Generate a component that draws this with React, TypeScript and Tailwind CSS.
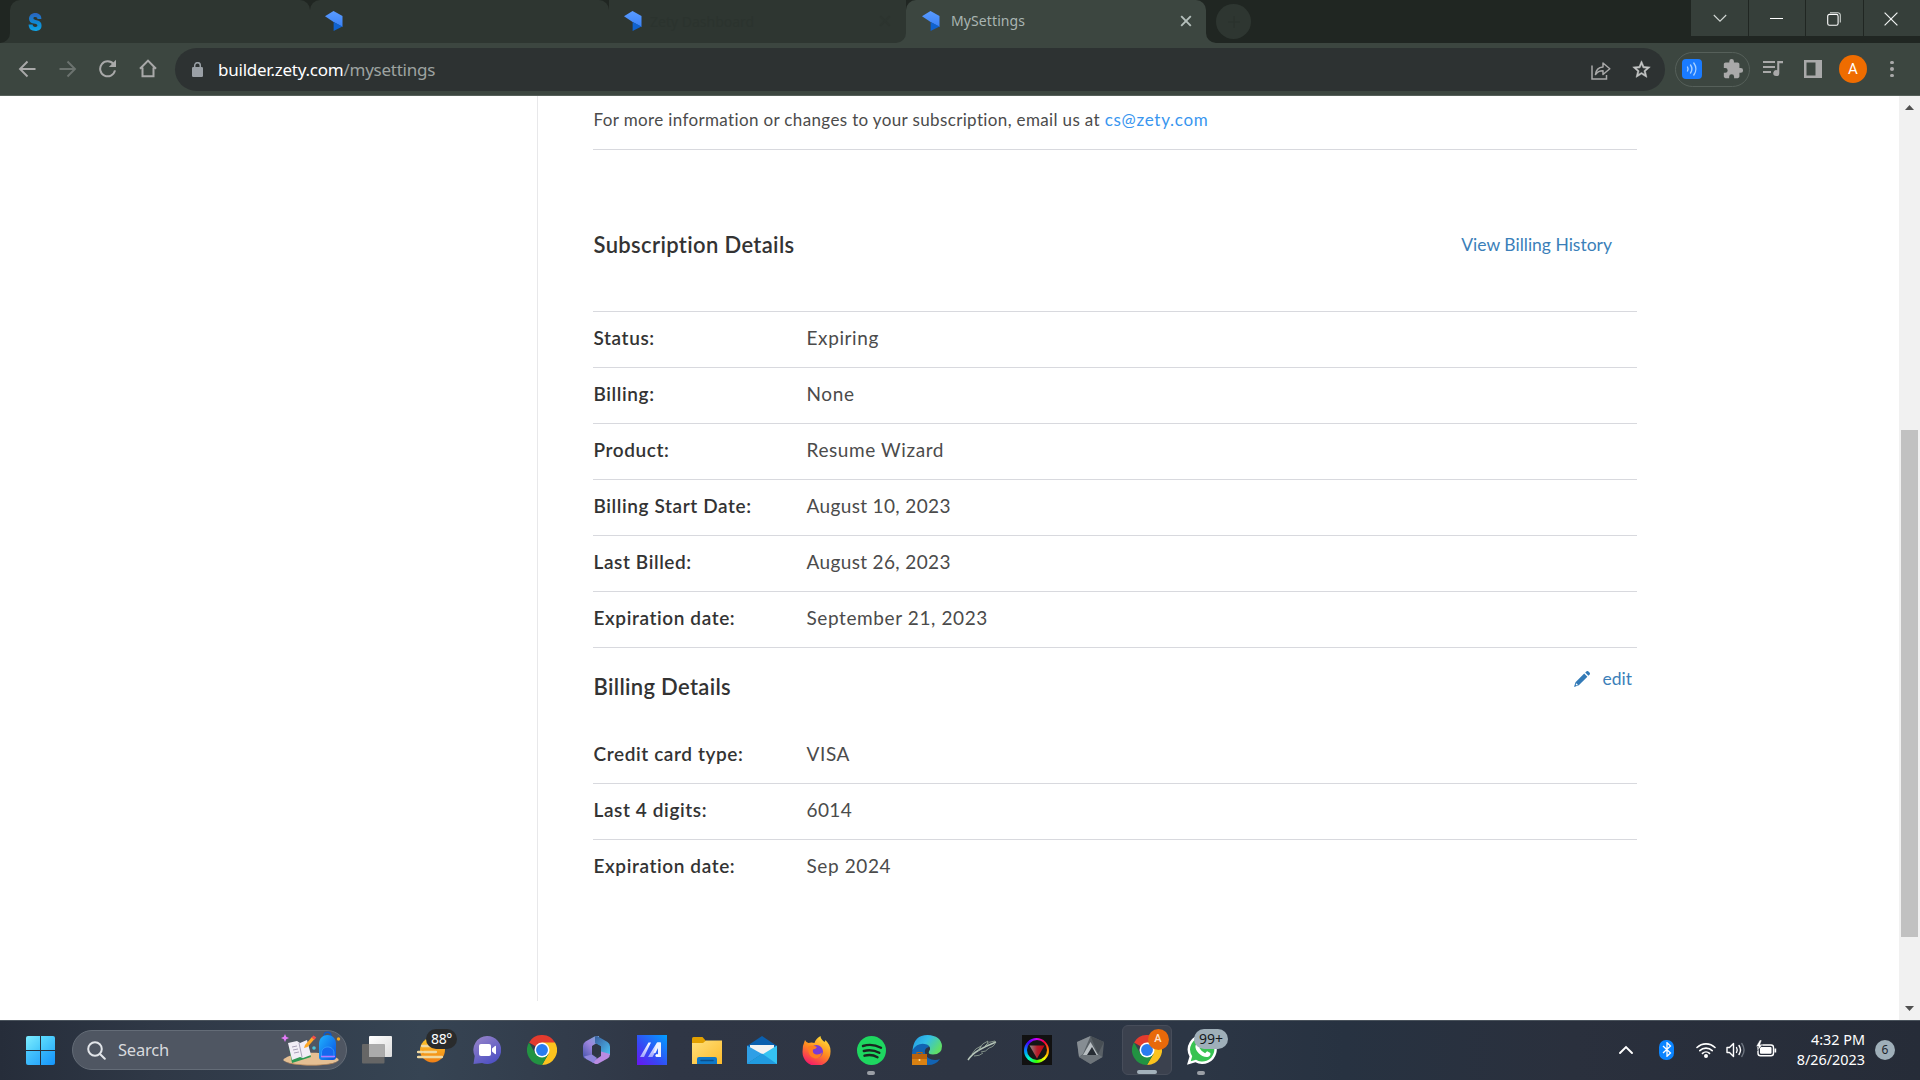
import type { ReactNode } from "react";

function ZetyLogo() {
  return (
    <svg width="18" height="20" viewBox="0 0 18 20" className="-mt-px shrink-0">
      <defs>
        <linearGradient id="zetyTop" x1="0" y1="0" x2="0" y2="1">
          <stop offset="0" stopColor="#5a9bff" />
          <stop offset="1" stopColor="#3a82f7" />
        </linearGradient>
      </defs>
      <path d="M0 5.2 8.5 0 17.5 5v11L8.6 11z" fill="url(#zetyTop)" />
      <path d="M8.6 11 17.5 15.5 8.6 20z" fill="#0f62cf" />
    </svg>
  );
}

function CloseX({ color }: { color: string }) {
  return (
    <svg width="12" height="12" viewBox="0 0 12 12" className="-mt-px shrink-0">
      <path d="M1.2 1.2 10.8 10.8M10.8 1.2 1.2 10.8" stroke={color} strokeWidth="1.9" />
    </svg>
  );
}

function TabStrip() {
  return (
    <div className="flex h-[43px] bg-[#202622]">
      <svg width="10" height="43" className="shrink-0">
        <path d="M10 33A10 10 0 0 1 0 43h10z" fill="#2e3631" />
      </svg>
      <div className="flex h-[43px] w-[300px] shrink-0 items-center rounded-t-[10px] bg-[#2e3631] pl-[18px] pr-4">
        <span className="block w-4 origin-left scale-x-[0.86] bg-gradient-to-b from-[#2f4fb5] via-[#0f86d2] to-[#12b4ee] bg-clip-text font-['Inter'] text-[25px] leading-7 font-black text-transparent">
          S
        </span>
      </div>
      <div className="flex h-[43px] w-[299px] shrink-0 items-center rounded-t-[10px] bg-[#2e3631] pl-[15px]">
        <ZetyLogo />
      </div>
      <div className="flex h-[43px] w-[297px] shrink-0 items-center bg-[#3c4640]">
        <div className="flex h-full w-full items-center rounded-br-[10px] bg-[#2e3631] pr-[15px] pl-[15px]">
          <ZetyLogo />
          <span className="ml-2 flex-1 font-['Noto_Sans',sans-serif] text-sm text-[#2b332e]">Zety Dashboard</span>
          <CloseX color="#2c342f" />
        </div>
      </div>
      <div className="flex h-[43px] w-[300px] shrink-0 items-center rounded-t-[10px] bg-[#3c4640] pr-[14px] pl-[16px]">
        <ZetyLogo />
        <span className="-mt-px ml-[11px] flex-1 font-['Noto_Sans',sans-serif] text-sm tracking-[0.1px] text-[#a9b5b2]">
          MySettings
        </span>
        <CloseX color="#b5c0bc" />
      </div>
      <svg width="10" height="43" className="shrink-0">
        <path d="M0 33a10 10 0 0 0 10 10H0z" fill="#3c4640" />
      </svg>
      <div className="mt-1 flex h-[35px] w-[35px] items-center justify-center rounded-full bg-[#2e3631]">
        <svg width="12" height="12" viewBox="0 0 12 12">
          <path d="M6 0v12M0 6h12" stroke="#2b332e" strokeWidth="1.6" />
        </svg>
      </div>
      <div className="ml-auto flex h-9 gap-px">
        <div className="flex w-[57px] items-center justify-center bg-[#363f3a]">
          <svg width="14" height="9" viewBox="0 0 14 9" className="mt-px">
            <path d="m.8 1 6.2 6.2L13.2 1" fill="none" stroke="#d3d8d5" strokeWidth="1.1" />
          </svg>
        </div>
        <div className="flex w-14 items-center justify-center bg-[#363f3a] pr-0.5">
          <span className="h-px w-[13px] bg-white" />
        </div>
        <div className="flex w-[57px] items-center justify-center bg-[#363f3a] pr-0.5">
          <svg width="14" height="14" viewBox="0 0 14 14" fill="none" stroke="#fff" strokeWidth="1.1" className="mt-px">
            <rect x=".7" y="2.4" width="10.4" height="10.8" rx="1.8" />
            <path d="M3 .7h7.6a2.6 2.6 0 0 1 2.7 2.7v7" stroke="#cdd3cf" />
          </svg>
        </div>
        <div className="flex w-[56px] items-center justify-center bg-[#363f3a] pr-0.5">
          <svg width="14" height="14" viewBox="0 0 14 14" className="mt-px">
            <path d="M.6.6 13.4 13.4M13.4.6.6 13.4" stroke="#f1f3f2" strokeWidth="1.2" />
          </svg>
        </div>
      </div>
    </div>
  );
}

function Toolbar() {
  return (
    <div className="flex h-[53px] items-center border-b border-[#56605a] bg-[#3c4640]">
      <div className="flex w-[175px] shrink-0 items-center pl-[18px]">
        <svg width="18" height="18" viewBox="0 0 18 18" fill="none" stroke="#a9a9a9" strokeWidth="1.9">
          <path d="M17.5 9H2.5M9.5 1.5 2 9l7.5 7.5" />
        </svg>
        <svg width="18" height="18" viewBox="0 0 18 18" fill="none" stroke="#6c736f" strokeWidth="1.9" className="ml-[23px]">
          <path d="M.5 9h15M8.5 1.5 16 9l-7.5 7.5" />
        </svg>
        <svg width="19" height="19" viewBox="0 0 19 19" className="-mt-px ml-[21px]">
          <path d="M15.6 5.2A7.5 7.5 0 1 0 17 11.4" fill="none" stroke="#a9a9a9" strokeWidth="2" />
          <path d="M18 .8V8h-7.200z" fill="#a9a9a9" />
        </svg>
        <svg width="18" height="19" viewBox="0 0 18 19" fill="none" stroke="#a9a9a9" strokeWidth="2" className="-mt-px ml-[22px]">
          <path d="M3.5 8.500v8.800h11V8.500M1 9.800l8-8.200 8 8.200" />
        </svg>
      </div>
      <div className="flex h-[43px] w-[1490px] shrink-0 items-center rounded-full bg-[#2d3232] pr-[13px] pl-[17px]">
        <svg width="11" height="15" viewBox="0 0 11 15" className="mt-px">
          <rect y="5" width="11" height="10" rx="1.3" fill="#9aa0a6" />
          <path d="M2.7 6V3.5a2.800 2.800 0 0 1 5.600 0V6" fill="none" stroke="#9aa0a6" strokeWidth="1.5" />
        </svg>
        <span className="mt-0.5 ml-[15px] flex-1 font-['Noto_Sans',sans-serif] text-[17px] tracking-[-0.24px] text-[#9da3a1]">
          <span className="text-white">builder.zety.com</span>/mysettings
        </span>
        <svg width="20" height="19" viewBox="0 0 20 19" fill="none" stroke="#a9a9a9" strokeWidth="1.5" className="mt-0.5">
          <path d="M1 4.500v13.500h14.500v-4" />
          <path
            d="M4.500 13.500c.5-5 3-7.300 7.500-7.600V2l6.800 5.800L12 13.500V9.800c-3.300 0-5.700 1-7.500 3.700z"
            strokeLinejoin="round"
          />
        </svg>
        <svg width="21" height="21" viewBox="0 0 24 24" className="mt-px ml-5">
          <path
            d="m22 9.240-7.190-.62L12 2 9.190 8.630 2 9.240l5.460 4.730L5.820 21 12 17.270 18.180 21l-1.630-7.030zM12 15.400l-3.760 2.270 1-4.280-3.320-2.880 4.380-.38L12 6.100l1.710 4.040 4.380.38-3.320 2.880 1 4.280z"
            fill="#c4c6c5"
            stroke="#c4c6c5"
            strokeWidth=".6"
          />
        </svg>
      </div>
      <div className="ml-[10px] flex h-[35px] w-[75px] shrink-0 items-center justify-between rounded-full border border-[#56605a] pr-[5px] pl-[6px]">
        <span className="flex h-5 w-5 items-center justify-center rounded-[4px] bg-[#1a7bff]">
          <svg width="12" height="14" viewBox="0 0 12 14" fill="none" stroke="#a8d0ff" strokeWidth="1.4" strokeLinecap="round">
            <path d="M1.500 5a4 4 0 0 1 0 4M4.500 3a7 7 0 0 1 0 8M7.800 1a10 10 0 0 1 0 12" />
          </svg>
        </span>
        <svg width="22" height="22" viewBox="0 0 24 24" fill="#a9a9a9" className="-mt-px">
          <path d="M20.500 11H19V7c0-1.100-.9-2-2-2h-4V3.500a2.500 2.500 0 0 0-5 0V5H4c-1.100 0-2 .9-2 2v3.800h1.500a2.700 2.700 0 0 1 0 5.400H2V20c0 1.100.9 2 2 2h3.800v-1.500a2.700 2.700 0 0 1 5.400 0V22H17c1.100 0 2-.9 2-2v-4h1.500a2.500 2.500 0 0 0 0-5z" />
        </svg>
      </div>
      <svg width="20" height="17" viewBox="0 0 20 17" className="-mt-px ml-[13px] shrink-0" fill="#a9a9a9">
        <path d="M0 1h12v2H0zM0 6h12v2H0zM0 11h8v2H0zM14.200 1H20v2.300h-3.700v9.700a3 3 0 1 1-2.100-2.800z" />
      </svg>
      <svg width="18" height="18" viewBox="0 0 18 18" className="ml-[21px] shrink-0">
        <path d="M0 0h18v18H0zM2.500 2.500v13h9v-13z" fill="#a9a9a9" fillRule="evenodd" />
      </svg>
      <span className="ml-[17px] flex h-7 w-7 shrink-0 items-center justify-center rounded-full bg-[#ef6c00] font-['Roboto',sans-serif] text-[15px] text-white">
        A
      </span>
      <span className="ml-[23px] flex flex-col gap-[3px]">
        <i className="h-[3.5px] w-[3.5px] rounded-full bg-[#a9a9a9]" />
        <i className="h-[3.5px] w-[3.5px] rounded-full bg-[#a9a9a9]" />
        <i className="h-[3.5px] w-[3.5px] rounded-full bg-[#a9a9a9]" />
      </span>
    </div>
  );
}

function Row({ label, value, last, tight }: { label: string; value: string; last?: boolean; tight?: boolean }) {
  return (
    <div
      className={
        last
          ? "flex h-[55px] items-center pb-[2px] pl-[0.5px] text-[19px] tracking-[0.6px]"
          : "flex h-14 items-center border-b border-[#d8d9de] pb-[2px] pl-[0.5px] text-[19px] tracking-[0.6px]"
      }
    >
      <span className="w-[213px] font-semibold text-[#333]">{label}</span>
      <span className={tight ? "tracking-[0.36px] text-[#4b4b4b]" : "text-[#4b4b4b]"}>{value}</span>
    </div>
  );
}

function Settings() {
  return (
    <div className="flex h-[924px] bg-white font-['Lato',sans-serif]">
      <div className="h-[905px] w-[538px] shrink-0 border-r border-[#e8e8ea]" />
      <div className="ml-[55px] w-[1044px] shrink-0">
        <p className="h-[54px] border-b border-[#d8d9de] pt-[12px] pl-[0.5px] text-[17px] leading-6 tracking-[0.36px] text-[#4b4b4b]">
          For more information or changes to your subscription, email us at{" "}
          <a className="tracking-[0.7px] text-[#3996ef]">cs@zety.com</a>
        </p>
        <div className="flex h-[162px] items-start justify-between border-b border-[#d8d9de] pt-[81px] pr-[25px] pl-[0.5px]">
          <h2 className="text-[22px] leading-7 font-semibold tracking-[0.35px] text-[#333]">Subscription Details</h2>
          <a className="text-[17.5px] leading-7 text-[#3b7fb9]">View Billing History</a>
        </div>
        <Row label="Status:" value="Expiring" />
        <Row label="Billing:" value="None" />
        <Row label="Product:" value="Resume Wizard" />
        <Row label="Billing Start Date:" value="August 10, 2023" tight />
        <Row label="Last Billed:" value="August 26, 2023" tight />
        <Row label="Expiration date:" value="September 21, 2023" />
        <div className="flex h-20 items-start justify-between pt-[25px] pr-[5px] pl-[0.5px]">
          <h2 className="text-[22px] leading-7 font-semibold tracking-[0.32px] text-[#333]">Billing Details</h2>
          <a className="-mt-[6px] flex items-center gap-3 text-[17.5px] leading-6 text-[#3b7fb9]">
            <svg width="16" height="16" viewBox="0 0 16 16" fill="#337ab7">
              <path d="M10.200 2.600 13.400 5.800 4.800 14.300 0 16l1.500-4.800zM11.200 1.600 12.300.5a1.600 1.600 0 0 1 2.200 0l1 1a1.600 1.600 0 0 1 0 2.200l-1.100 1.100z" />
              <path d="m2.200 12.200 1.800 1.800-1.300.5-1-1z" fill="#fff" />
            </svg>
            edit
          </a>
        </div>
        <Row label="Credit card type:" value="VISA" />
        <Row label="Last 4 digits:" value="6014" tight />
        <Row label="Expiration date:" value="Sep 2024" last />
      </div>
      <div className="ml-auto flex w-[21px] flex-col items-center bg-[#f1f1f1]">
        <svg width="9" height="5" viewBox="0 0 9 5" className="mt-[9px] shrink-0">
          <path d="M4.500 0 9 5H0z" fill="#505050" />
        </svg>
        <div className="mt-80 h-[507px] w-[17px] bg-[#c1c1c1]" />
        <svg width="9" height="5" viewBox="0 0 9 5" className="mt-auto mb-[9px] shrink-0">
          <path d="M0 0h9L4.500 5z" fill="#505050" />
        </svg>
      </div>
    </div>
  );
}

function Chrome() {
  return (
    <svg width="30" height="30" viewBox="0 0 48 48">
      <path d="M24 24 3.200 12a24 24 0 0 1 41.600 0z" fill="#e33b2e" />
      <path d="M24 12h20.800A24 24 0 0 1 24 48l10.400-18z" fill="#fcc31e" />
      <path d="M3.200 12A24 24 0 0 0 24 48l10.400-18H13.600z" fill="#229342" />
      <circle cx="24" cy="24" r="12" fill="#fff" />
      <circle cx="24" cy="24" r="9.500" fill="#2a7cf0" />
    </svg>
  );
}

function Cell({ children, dot }: { children: ReactNode; dot?: boolean }) {
  return (
    <div className="relative flex h-[60px] w-[55px] shrink-0 items-center justify-center pb-px">
      {children}
      {dot && <span className="absolute bottom-[6px] left-[23px] h-1 w-2 rounded-full bg-[#9b9fa6]" />}
    </div>
  );
}

function SearchArt() {
  return (
    <svg width="60" height="36" viewBox="0 0 60 36" className="-mt-[3px]">
      <defs>
        <linearGradient id="bag" x1="0" y1="0" x2="1" y2="1">
          <stop offset="0" stopColor="#1fb2ff" />
          <stop offset="1" stopColor="#0a4fe0" />
        </linearGradient>
      </defs>
      <path d="M2 29c8-9 48-10 56 0-6 7-49 7-56 0z" fill="#e5bf93" />
      <path d="M3 30c8 5 48 5 54 0-3 6-49 6-54 0z" fill="#b98858" />
      <path d="m8 16 19-3 3 13-19 6z" fill="#2f9a55" />
      <path d="m7 12 9-2 3 2 7-3 4 15-8 3-3-1-8 3z" fill="#f1edf6" />
      <path d="m18 12 3 14M11 16l5-1M12 19l5-1M13 22l5-1" stroke="#a8a1b8" fill="none" />
      <path d="m24 14 7-8 2.500 2-7 8-3.500 1z" fill="#ffa726" />
      <path d="m30.500 6.500 2-2 2.800 2-2 2.200z" fill="#f0504a" />
      <path d="M43 5c0-5 7-5 7 0" fill="none" stroke="#0d57c7" strokeWidth="1.5" />
      <path d="M38 13c0-12 17-12 17 0v13q0 3-3 3H41q-3 0-3-3z" fill="url(#bag)" />
      <path d="M40.500 22c0-8 12.500-8 12.500 0v4H40.500z" fill="#1668ef" stroke="#37a5ff" strokeWidth=".8" />
      <path d="M40 25.500h14" stroke="#b679ff" strokeWidth="1.500" />
      <path d="m4 3 1.200 2.800L8 7 5.200 8.200 4 11 2.800 8.200 0 7l2.800-1.200z" fill="#e27bf7" />
      <circle cx="33" cy="17" r="1.8" fill="#4cc3d9" />
      <circle cx="57.5" cy="8" r="1.7" fill="#f4a81d" />
    </svg>
  );
}

function Taskbar() {
  return (
    <div className="flex h-[60px] items-center border-t border-[#4a535c] bg-[linear-gradient(90deg,#262d3a_0%,#2f3846_8%,#364453_22%,#2f3645_35%,#2e3543_50%,#2c3645_62%,#273241_70%,#2a303d_82%,#262c38_100%)] font-['Noto_Sans',sans-serif]">
      <div className="ml-[26px] grid h-[29px] w-[29px] shrink-0 grid-cols-2 gap-px">
        <i className="rounded-tl-[2px] bg-gradient-to-br from-[#7cecff] to-[#45c8fb]" />
        <i className="rounded-tr-[2px] bg-gradient-to-br from-[#5cdcff] to-[#33b5fa]" />
        <i className="rounded-bl-[2px] bg-gradient-to-br from-[#4bc9fd] to-[#2aa7fa]" />
        <i className="rounded-br-[2px] bg-gradient-to-br from-[#36b6fb] to-[#1595fc]" />
      </div>
      <div className="-mt-px ml-[17px] flex h-10 w-[275px] shrink-0 items-center rounded-full border border-[#646c77] bg-[#4f5662] pr-[5px] pl-[14px]">
        <svg width="19" height="19" viewBox="0 0 19 19" fill="none" stroke="#e2e5e9" strokeWidth="2" strokeLinecap="round">
          <circle cx="8" cy="8" r="6.8" />
          <path d="m13 13 4.800 4.800" />
        </svg>
        <span className="ml-3 flex-1 text-[16.500px] tracking-[-0.2px] text-[#d8dade]">Search</span>
        <SearchArt />
      </div>
      <div className="ml-[2px] flex">
        <Cell>
          <svg width="30" height="28" viewBox="0 0 30 28">
            <defs>
              <linearGradient id="tv" x1="0" y1="0" x2="1" y2="1">
                <stop offset="0" stopColor="#fff" />
                <stop offset="1" stopColor="#dcdcdc" />
              </linearGradient>
            </defs>
            <rect x="7" y="0" width="23" height="21" rx="1" fill="url(#tv)" />
            <rect x="0" y="8" width="22.5" height="19.5" rx="1" fill="#666" />
            <path d="M7 8h15.500v13H7z" fill="#ababab" />
          </svg>
        </Cell>
        <Cell>
          <svg width="30" height="28" viewBox="0 0 30 28">
            <defs>
              <linearGradient id="sun" x1="0" y1="0" x2="0" y2="1">
                <stop offset="0" stopColor="#ffc928" />
                <stop offset="1" stopColor="#f07f16" />
              </linearGradient>
            </defs>
            <circle cx="15.5" cy="14" r="12.5" fill="url(#sun)" />
            <path d="M5 10h8M1 16h4M7 16h12M1 21h24M16 10h8" stroke="#f1d9a0" strokeWidth="2.3" strokeLinecap="round" />
          </svg>
          <span className="absolute top-2 left-[22px] flex h-5 w-[31px] items-center justify-center rounded-full bg-[#292b2c] text-[14px] tracking-[-0.3px] text-white">
            88°
          </span>
        </Cell>
        <Cell>
          <svg width="28" height="28" viewBox="0 0 28 28">
            <defs>
              <linearGradient id="chat" x1="0" y1="0" x2="0.6" y2="1">
                <stop offset="0" stopColor="#9a86c8" />
                <stop offset="1" stopColor="#5052c4" />
              </linearGradient>
            </defs>
            <path d="M14 0a14 14 0 1 1-5 27L.5 28l1.200-8A14 14 0 0 1 14 0z" fill="url(#chat)" />
            <rect x="6" y="8" width="12" height="12" rx="2" fill="#fff" />
            <path d="m19 12.500 3-2.500q1-.5 1 .5v7q0 1-1 .5l-3-2.500z" fill="#fff" />
          </svg>
        </Cell>
        <Cell>
          <Chrome />
        </Cell>
        <Cell>
          <svg width="27" height="28" viewBox="0 0 27 28">
            <defs>
              <linearGradient id="mA" x1="0.8" y1="0" x2="0" y2="1">
                <stop offset="0" stopColor="#7fa6d8" />
                <stop offset=".4" stopColor="#9c84dc" />
                <stop offset="1" stopColor="#4453ac" />
              </linearGradient>
              <linearGradient id="mB" x1="0" y1="0" x2="1" y2="1">
                <stop offset="0" stopColor="#3a5f9e" />
                <stop offset="1" stopColor="#4cc0f2" />
              </linearGradient>
            </defs>
            <path d="M11.500.5 2.500 5.500Q0 7 0 10v9q0 2 1.500 3.500L9 19v-9l7-4.500V0z" fill="url(#mA)" />
            <path d="m12 .3 2.500-.1L24.500 6Q27 7.500 27 10.500V19l-9-3v-5.500L12 7z" fill="url(#mB)" />
            <path d="M18 15.500 27 18q0 3-2.500 4.500L15.500 27.500q-2 1-4 0l-2.500-1.500 9-6z" fill="#b98be2" />
            <path d="M1 20.500 9 18.500l5 3.500-3.500 5L3 23z" fill="#8e86dd" />
            <path d="M9 10.500 13.500 8l4.500 2.500v6l-4.500 3.500L9 17z" fill="#2e3644" />
          </svg>
        </Cell>
        <Cell>
          <svg width="30" height="30" viewBox="0 0 30 30">
            <defs>
              <linearGradient id="ma" x1="1" y1="0" x2="0" y2="1">
                <stop offset="0" stopColor="#00a0ff" />
                <stop offset=".6" stopColor="#3648f4" />
                <stop offset="1" stopColor="#6a14f0" />
              </linearGradient>
              <linearGradient id="maStroke" x1="0" y1="0" x2="0" y2="1">
                <stop offset="0" stopColor="#fff" />
                <stop offset="1" stopColor="#9fa6ff" />
              </linearGradient>
            </defs>
            <path d="M0 0h30v30H0z" fill="url(#ma)" />
            <path d="M11.500 7.500H14L7 22H3zM20 7.500h3.500L15.500 22h-4.500z" fill="url(#maStroke)" />
            <path d="M20.500 7.500H24V22h-3v-9l-2.500 5h-2z" fill="#eef1ff" />
            <circle cx="20" cy="20.5" r="1.6" fill="#fff" />
          </svg>
        </Cell>
        <Cell>
          <svg width="30" height="27" viewBox="0 0 30 27">
            <defs>
              <linearGradient id="fold" x1="0" y1="0" x2="1" y2="1">
                <stop offset="0" stopColor="#ffe07a" />
                <stop offset="1" stopColor="#fdbb2c" />
              </linearGradient>
            </defs>
            <path d="M0 1.500Q0 0 1.500 0h9L14 4v3H0z" fill="#e2a000" />
            <path d="M0 6h11l3-2.500h16V27H0z" fill="url(#fold)" />
            <path d="M5 27v-5q0-2 2-2h16q2 0 2 2v5z" fill="#0f78c8" />
            <path d="M9 23.500h12" stroke="#0b4f8c" strokeWidth="1.5" strokeLinecap="round" />
          </svg>
        </Cell>
        <Cell>
          <svg width="30" height="28" viewBox="0 0 30 28">
            <path d="M0 10 15 0l15 10v6H0z" fill="#0a5fae" />
            <path d="M3 9h24v9H3z" fill="#f2f2f2" />
            <path d="M0 9.500 15 18 0 28z" fill="#2f9fe6" />
            <path d="M30 9.500 0 28h30z" fill="#35c3f2" />
            <path d="m0 28 15-10.500L30 28z" fill="#219be0" />
          </svg>
        </Cell>
        <Cell>
          <svg width="29" height="29" viewBox="0 0 29 29" className="-ml-px">
            <defs>
              <linearGradient id="ff" x1=".8" y1="0" x2=".3" y2="1">
                <stop offset="0" stopColor="#ffe43a" />
                <stop offset=".5" stopColor="#ff8a1f" />
                <stop offset="1" stopColor="#f5156c" />
              </linearGradient>
            </defs>
            <path
              d="M3 4q1.500 3 3.500 3 3-1 6 0 1-4 6-7 0 3 4 6 1-1 .8-2Q29 9 28.500 16a14 14 0 0 1-28 0Q.5 9 3 4z"
              fill="url(#ff)"
            />
            <circle cx="14.5" cy="15.5" r="6.5" fill="#7a3bd6" />
            <path d="M6 11q4-3 9 0-1 2-4 2.500-1 4 3 5 4 .5 6-2-1 6-7 6-7-1-7-11.500z" fill="#ff7d20" />
          </svg>
        </Cell>
        <Cell dot>
          <svg width="29" height="29" viewBox="0 0 29 29">
            <circle cx="14.5" cy="14.5" r="14.5" fill="#1ed760" />
            <path
              d="M6 10q9-3 18 1.800M6.800 15q8-2.300 15.500 1.800M7.500 19.700q7-2 13 1.500"
              fill="none"
              stroke="#1a2620"
              strokeWidth="2.4"
              strokeLinecap="round"
            />
          </svg>
        </Cell>
        <Cell>
          <svg width="30" height="30" viewBox="0 0 30 30">
            <defs>
              <linearGradient id="edge" x1="0" y1="0" x2="1" y2=".5">
                <stop offset="0" stopColor="#2196e3" />
                <stop offset=".5" stopColor="#33bfe8" />
                <stop offset="1" stopColor="#5fdd68" />
              </linearGradient>
            </defs>
            <path d="M0 19Q0 8 11 8q5 0 6 4-5 1-4 6 2 7 10 7 3 0 5-1-4 6-12 6Q1 30 0 19z" fill="#1263b2" />
            <path d="M.5 15Q2 0 15.500 0 29 .5 30 11q0 8.500-9 8.500-5.500 0-4-3Q20 12.500 15 9.500 6 6.500.5 15z" fill="url(#edge)" />
            <path d="M0 19h15v11H0z" fill="#d98112" />
            <path d="M0 19h15v5H0z" fill="#b9620b" />
            <path d="M5 19v-1.500h5V19" fill="none" stroke="#b9620b" strokeWidth="1.2" />
            <circle cx="7.5" cy="25" r="1" fill="#ffe09a" />
          </svg>
        </Cell>
        <Cell>
          <svg width="30" height="21" viewBox="0 0 30 21" fill="none" stroke="#98a89b" strokeWidth=".8">
            <path d="M1 20Q5 14 12 10T29 2" strokeWidth="1.5" stroke="#b7c6ba" />
            <path d="M5 14q3-6 9-8-1 3-3 5M12 9q3-6 9-8 0 3-3 5M18 6q4-5 10-5 1 5-6 7M7 16q6 0 9-3M14 12q5 0 8-4" />
          </svg>
        </Cell>
        <Cell>
          <div className="flex h-[30px] w-[30px] items-center justify-center bg-[#111]">
            <div className="flex h-[25px] w-[25px] items-center justify-center rounded-full bg-[conic-gradient(from_0deg,#c0f,#f03,#f80,#ff0,#3f0,#0fc,#08f,#40f,#c0f)]">
              <div className="flex h-[20px] w-[20px] items-center justify-center rounded-full bg-[#151515] pt-1">
                <svg width="16" height="14" viewBox="0 0 16 14">
                  <defs>
                    <linearGradient id="tri">
                      <stop offset="0" stopColor="#8d8d8d" />
                      <stop offset=".5" stopColor="#b3202c" />
                      <stop offset="1" stopColor="#c00010" />
                    </linearGradient>
                  </defs>
                  <path d="M.5.5h15L8 13.500z" fill="url(#tri)" />
                </svg>
              </div>
            </div>
          </div>
        </Cell>
        <Cell>
          <svg width="27" height="28" viewBox="0 0 27 28" className="-ml-0.5">
            <path d="M13.500 0 27 6l-1.500 15-12 7L2 21 0 6z" fill="#596066" />
            <path d="M13.500 0 0 6l2 15 4-3z" fill="#868d93" />
            <path d="M13.500 0 27 6l-6 12z" fill="#474e54" />
            <path d="m2 21 11.500 7 12-7-5-3H7z" fill="#6d747a" />
            <path d="m13.500 6 7.500 13H6z" fill="#b9bfc3" />
            <path d="m15 11 4.500 8H10z" fill="#262c33" />
          </svg>
        </Cell>
        <Cell>
          <div className="relative flex h-[50px] w-[50px] shrink-0 items-center justify-center rounded-md border border-[#474d5a] bg-[#3b414e]">
            <Chrome />
            <span className="absolute top-[3px] left-[25px] flex h-[21px] w-[21px] items-center justify-center rounded-full bg-[#e8690a] font-['Roboto',sans-serif] text-[11px] font-medium text-[#ffe1c9]">
              A
            </span>
            <span className="absolute bottom-0 left-[14px] h-1 w-5 rounded-full bg-[#a3b1bb]" />
          </div>
        </Cell>
        <Cell dot>
          <svg width="30" height="30" viewBox="0 0 30 30">
            <path d="M15.500 0a14.500 14.500 0 1 1-7 27.300L0 29.800 2.500 21.500A14.500 14.500 0 0 1 15.500 0z" fill="#fff" />
            <path d="M15.500 2.500a12 12 0 1 1-6.500 22.200l-5.300 1.500 1.500-5A12 12 0 0 1 15.500 2.500z" fill="#37c351" />
            <path
              d="M10.500 8q1.500-1 2.300.3l1.300 3-1.500 2q2 3.500 5.500 5l2-2 3.300 1.700q.5 3-3 4c-6 .5-12.500-6-12-11q.3-2 2.100-3z"
              fill="#fff"
            />
          </svg>
          <span className="absolute top-2 left-[20px] flex h-5 w-[34px] items-center justify-center rounded-full bg-[#9fafb9] text-[14px] text-[#15191c]">
            99+
          </span>
        </Cell>
      </div>
      <div className="-mt-[2px] ml-auto flex items-center pr-[25px] text-white">
        <svg width="14" height="9" viewBox="0 0 14 9">
          <path d="m1 8 6-6 6 6" fill="none" stroke="#fff" strokeWidth="1.9" strokeLinecap="round" />
        </svg>
        <span className="ml-[26px] flex h-5 w-[15px] items-center justify-center rounded-[7px] bg-[#0a84ff]">
          <svg width="10" height="15" viewBox="0 0 10 15" fill="none" stroke="#fff" strokeWidth="1.3">
            <path d="m1 4 7.500 7L5 14.300V.7L8.500 4 1 11" />
          </svg>
        </span>
        <svg
          width="20"
          height="16"
          viewBox="0 0 20 16"
          fill="none"
          stroke="#fff"
          strokeWidth="1.6"
          strokeLinecap="round"
          className="ml-[22px]"
        >
          <path d="M1 5.500a13 13 0 0 1 18 0M3.800 8.600a9 9 0 0 1 12.400 0M6.500 11.400a5 5 0 0 1 7 0" />
          <circle cx="10" cy="14" r="1.2" fill="#fff" />
        </svg>
        <svg
          width="20"
          height="16"
          viewBox="0 0 20 16"
          fill="none"
          stroke="#fff"
          strokeWidth="1.4"
          strokeLinecap="round"
          strokeLinejoin="round"
          className="ml-[10px]"
        >
          <path d="M1 5.500h2.500L7.500 1.500v13l-4-4H1zM10.500 5.500q1.500 2.500 0 5M13 3.500q3 4.500 0 9" />
          <path d="M15.800 1.500q4.500 6.500 0 13" stroke="#6c737e" />
        </svg>
        <svg width="21" height="17" viewBox="0 0 21 17" className="-mt-0.5 ml-[10px]">
          <rect x="2" y="5" width="15.5" height="10.8" rx="2.5" fill="none" stroke="#fff" strokeWidth="1.4" />
          <rect x="4" y="7" width="11.5" height="6.8" rx="1" fill="#fff" />
          <path d="M18.500 8.500h1.700v4h-1.700z" fill="#fff" />
          <path d="M3.800 0 0 6.500h2.500L1.500 11l5-6.200H4.200L5.800 0z" fill="#fff" stroke="#2a303d" strokeWidth=".5" />
        </svg>
        <div className="ml-[17px] flex w-[71px] flex-col items-end text-[14.4px] leading-5">
          <span>4:32 PM</span>
          <span>8/26/2023</span>
        </div>
        <span className="ml-[10px] flex h-5 w-5 items-center justify-center rounded-full bg-[#9fafb9] text-xs text-[#20262c]">
          6
        </span>
      </div>
    </div>
  );
}

export default function App() {
  return (
    <div className="flex h-[1080px] w-[1920px] flex-col overflow-hidden bg-white">
      <TabStrip />
      <Toolbar />
      <Settings />
      <Taskbar />
    </div>
  );
}
